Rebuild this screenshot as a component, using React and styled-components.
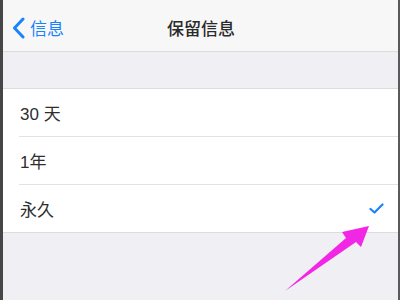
import React from 'react';
import styled, { createGlobalStyle } from 'styled-components';

const GlobalStyle = createGlobalStyle`
  body {
    margin: 0;
    font-family: "Liberation Sans", "Noto Sans CJK SC", sans-serif;
    background: #efeff4;
  }
`;

const Frame = styled.div`
  position: relative;
  width: 400px;
  height: 300px;
  box-sizing: border-box;
  border-left: 3px solid #464646;
  border-right: 2px solid #5a5a5a;
  background: #efeff4;
  overflow: hidden;
  display: flex;
  flex-direction: column;
`;

const NavBar = styled.div`
  height: 52px;
  box-sizing: border-box;
  background: #f7f7f8;
  border-bottom: 1px solid #dcdcde;
  display: grid;
  grid-template-columns: 1fr auto 1fr;
  align-items: center;
  padding: 4px 8px 0 9px;
`;

const Back = styled.div`
  display: flex;
  align-items: center;
  gap: 5px;
  color: #1a82fb;
  font-size: 17px;
`;

const Title = styled.div`
  font-size: 17px;
  color: #2a2a2a;
  font-weight: 500;
`;

const Gap = styled.div`
  height: 36px;
`;

const List = styled.div`
  background: #fff;
  border-top: 1px solid #dcdcde;
  border-bottom: 1px solid #dcdcde;
`;

const Row = styled.div`
  height: 47px;
  margin-left: 16px;
  padding-right: 14px;
  display: flex;
  align-items: center;
  justify-content: space-between;
  font-size: 17px;
  color: #2e2e2e;
  border-bottom: ${p => (p.$last ? 'none' : '1px solid #e2e2e4')};
`;

const Label = styled.span`
  padding-left: 1px;
`;

const ArrowLayer = styled.svg`
  position: absolute;
  left: 0;
  top: 0;
  pointer-events: none;
`;

const options = [
  { label: '30 天' },
  { label: '1年' },
  { label: '永久', checked: true },
];

const App = () => (
  <>
    <GlobalStyle />
    <Frame>
      <NavBar>
        <Back>
          <svg width="13" height="22" viewBox="0 0 13 22">
            <path d="M11 2 L2.5 11 L11 20" fill="none" stroke="#1a82fb" strokeWidth="3" strokeLinecap="round" strokeLinejoin="round" />
          </svg>
          信息
        </Back>
        <Title>保留信息</Title>
        <div />
      </NavBar>
      <Gap />
      <List>
        {options.map((o, i) => (
          <Row key={o.label} $last={i === options.length - 1}>
            <Label>{o.label}</Label>
            {o.checked && (
              <svg width="15" height="11" viewBox="0 0 15 11">
                <path d="M1.5 6 L5.5 9.5 L13.5 1.5" fill="none" stroke="#1a82fb" strokeWidth="2.2" strokeLinecap="round" strokeLinejoin="round" />
              </svg>
            )}
          </Row>
        ))}
      </List>
      <ArrowLayer width="400" height="300" viewBox="0 0 400 300">
        <path d="M282 291 L343 238 L339 232 L366 226 L358 247 L353 242 Z" fill="#f227e6" />
      </ArrowLayer>
    </Frame>
  </>
);

export default App;
